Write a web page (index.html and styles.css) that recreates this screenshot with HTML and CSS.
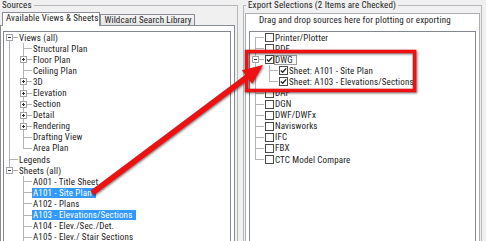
FILE: index.html
```html
<!DOCTYPE html>
<html lang="en">
<head>
    <meta charset="UTF-8">
    <title>Export</title>
    <link rel="stylesheet" href="styles.css">
</head>
<body>

    <div class="window">

        <fieldset class="group sources">
            <legend>Sources</legend>
            <div class="tabs">
                <div class="tab active">Available Views &amp; Sheets</div>
                <div class="tab">Wildcard Search Library</div>
            </div>
            <div class="tab-page">
                <ul class="tree">
                    <li class="row"><span class="cell first"><span class="exp"></span></span><span class="label">Views (all)</span></li>
                    <li class="row"><span class="cell pipe"></span><span class="cell tee"></span><span class="label">Structural Plan</span></li>
                    <li class="row"><span class="cell pipe"></span><span class="cell tee"><span class="exp plus"></span></span><span class="label">Floor Plan</span></li>
                    <li class="row"><span class="cell pipe"></span><span class="cell tee"></span><span class="label">Ceiling Plan</span></li>
                    <li class="row"><span class="cell pipe"></span><span class="cell tee"><span class="exp plus"></span></span><span class="label">3D</span></li>
                    <li class="row"><span class="cell pipe"></span><span class="cell tee"><span class="exp plus"></span></span><span class="label">Elevation</span></li>
                    <li class="row"><span class="cell pipe"></span><span class="cell tee"><span class="exp plus"></span></span><span class="label">Section</span></li>
                    <li class="row"><span class="cell pipe"></span><span class="cell tee"><span class="exp plus"></span></span><span class="label">Detail</span></li>
                    <li class="row"><span class="cell pipe"></span><span class="cell tee"><span class="exp plus"></span></span><span class="label">Rendering</span></li>
                    <li class="row"><span class="cell pipe"></span><span class="cell tee"></span><span class="label">Drafting View</span></li>
                    <li class="row"><span class="cell pipe"></span><span class="cell elbow"></span><span class="label">Area Plan</span></li>
                    <li class="row"><span class="cell tee"></span><span class="label">Legends</span></li>
                    <li class="row"><span class="cell elbow"><span class="exp"></span></span><span class="label">Sheets (all)</span></li>
                    <li class="row"><span class="cell"></span><span class="cell tee"></span><span class="label">A001 - Title Sheet</span></li>
                    <li class="row"><span class="cell"></span><span class="cell tee"></span><span class="label selected">A101 - Site Plan</span></li>
                    <li class="row"><span class="cell"></span><span class="cell tee"></span><span class="label">A102 - Plans</span></li>
                    <li class="row"><span class="cell"></span><span class="cell tee"></span><span class="label selected">A103 - Elevations/Sections</span></li>
                    <li class="row"><span class="cell"></span><span class="cell tee"></span><span class="label">A104 - Elev./Sec./Det.</span></li>
                    <li class="row"><span class="cell"></span><span class="cell tee"></span><span class="label">A105 - Elev./ Stair Sections</span></li>
                </ul>
            </div>
        </fieldset>

        <fieldset class="group export">
            <legend>Export Selections (2 Items are Checked)</legend>
            <div class="drop-box">
                <p class="hint">Drag and drop sources here for plotting or exporting</p>
                <ul class="tree checks">
                    <li class="row"><span class="cell first"></span><span class="cb"></span><span class="label">Printer/Plotter</span></li>
                    <li class="row"><span class="cell tee"></span><span class="cb"></span><span class="label">PDF</span></li>
                    <li class="row"><span class="cell tee"><span class="exp"></span></span><span class="cb"><svg viewBox="0 0 7 7" width="7" height="7"><path d="M0.8 3.4 L2.7 5.3 L6.2 1.4" fill="none" stroke="#222" stroke-width="1.4"/></svg></span><span class="label focus">DWG</span></li>
                    <li class="row"><span class="cell pipe"></span><span class="cell tee"></span><span class="cb"><svg viewBox="0 0 7 7" width="7" height="7"><path d="M0.8 3.4 L2.7 5.3 L6.2 1.4" fill="none" stroke="#222" stroke-width="1.4"/></svg></span><span class="label">Sheet: A101 - Site Plan</span></li>
                    <li class="row"><span class="cell pipe"></span><span class="cell elbow"></span><span class="cb"><svg viewBox="0 0 7 7" width="7" height="7"><path d="M0.8 3.4 L2.7 5.3 L6.2 1.4" fill="none" stroke="#222" stroke-width="1.4"/></svg></span><span class="label">Sheet: A103 - Elevations/Sections</span></li>
                    <li class="row"><span class="cell tee"></span><span class="cb"></span><span class="label">DAF</span></li>
                    <li class="row"><span class="cell tee"></span><span class="cb"></span><span class="label">DGN</span></li>
                    <li class="row"><span class="cell tee"></span><span class="cb"></span><span class="label">DWF/DWFx</span></li>
                    <li class="row"><span class="cell tee"></span><span class="cb"></span><span class="label">Navisworks</span></li>
                    <li class="row"><span class="cell tee"></span><span class="cb"></span><span class="label">IFC</span></li>
                    <li class="row"><span class="cell tee"></span><span class="cb"></span><span class="label">FBX</span></li>
                    <li class="row"><span class="cell elbow"></span><span class="cb"></span><span class="label">CTC Model Compare</span></li>
                </ul>
            </div>
        </fieldset>

    </div>

    <!-- callout drawn on top of the dialog -->
    <svg class="annot" viewBox="0 0 486 241" width="486" height="241">
        <g class="callout">
            <rect x="246.5" y="51.5" width="168" height="39" fill="none" stroke="#ee1111" stroke-width="3.5"/>
            <line x1="92" y1="193" x2="248" y2="76.3" stroke="#ee1111" stroke-width="5.5"/>
            <polygon points="263,65 252.1,83.8 241.9,70.2" fill="#ee1111"/>
        </g>
    </svg>

</body>
</html>
```

FILE: styles.css
```css
* {
    box-sizing: border-box;
}

body {
    margin: 0;
    width: 486px;
    height: 241px;
    overflow: hidden;
    position: relative;
    background: #f0f0f0;
    font-family: Roboto, "Liberation Sans", Arial, sans-serif;
    font-stretch: 80%;
    font-size: 9px;
    letter-spacing: 0.15px;
    color: #222;
}

.window {
    display: flex;
    gap: 5px;
    height: 100%;
}

/* group boxes */

.group {
    margin: 0;
    min-width: 0;
    display: flex;
    flex-direction: column;
    border: 1px solid #b3b7bb;
    border-bottom: none;
}

.group legend {
    padding: 0 2px;
    line-height: 11px;
}

.sources {
    flex: none;
    width: 243px;
    margin-left: -5px;
    padding: 1px 2px 0 4px;
}

.export {
    flex: none;
    width: 239px;
    padding: 2px 1px 0 1px;
}

.export legend {
    margin-left: 1px;
}

/* tabs */

.tabs {
    display: flex;
    align-items: flex-end;
    margin-left: 2px;
    position: relative;
    z-index: 1;
}

.tab {
    border: 1px solid #898c95;
    border-bottom: none;
    line-height: 11px;
    height: 11px;
    padding: 0 2px 0 3px;
    white-space: nowrap;
    background: linear-gradient(#f5f5f5, #e4e4e4);
}

.tab.active {
    height: 14px;
    margin-bottom: -1px;
    padding: 0 1px 0 3px;
    background: #fff;
}

.tab-page {
    flex: 1;
    min-height: 0;
    display: flex;
    flex-direction: column;
    background: #fff;
    border: 1px solid #898c95;
    border-bottom: none;
    padding: 5px 3px 0 2px;
}

/* tree views */

.tree {
    flex: 1;
    min-height: 0;
    overflow: hidden;
    list-style: none;
    margin: 0;
    padding: 0;
    border: 1px solid #828790;
    border-bottom: none;
    background: #fff;
}

.row {
    display: flex;
    align-items: center;
    height: 11.1px;
    white-space: nowrap;
}

.cell {
    flex: none;
    width: 14px;
    height: 100%;
    display: flex;
    align-items: center;
}

.pipe {
    background: linear-gradient(#b4b4b4, #b4b4b4) 5px 0 / 1px 100% no-repeat;
}

.tee {
    background:
        linear-gradient(#b4b4b4, #b4b4b4) 5px 0 / 1px 100% no-repeat,
        linear-gradient(#b4b4b4, #b4b4b4) 5px 50% / 9px 1px no-repeat;
}

.elbow {
    background:
        linear-gradient(#b4b4b4, #b4b4b4) 5px 0 / 1px 50% no-repeat,
        linear-gradient(#b4b4b4, #b4b4b4) 5px 50% / 9px 1px no-repeat;
}

.first {
    background:
        linear-gradient(#b4b4b4, #b4b4b4) 5px 100% / 1px 50% no-repeat,
        linear-gradient(#b4b4b4, #b4b4b4) 5px 50% / 9px 1px no-repeat;
}

.exp {
    width: 7px;
    height: 7px;
    margin-left: 2px;
    border: 1px solid #a3a3a3;
    background: linear-gradient(#333, #333) center / 3px 1px no-repeat, #fff;
}

.exp.plus {
    background:
        linear-gradient(#333, #333) center / 3px 1px no-repeat,
        linear-gradient(#333, #333) center / 1px 3px no-repeat,
        #fff;
}

.label {
    line-height: 10px;
    padding: 0 4px 0 1px;
}

.label.selected {
    background: #3399ff;
    color: #fff;
}

.label.focus {
    box-shadow: inset 0 0 0 1px #9c9c9c;
}

/* export side */

.drop-box {
    flex: 1;
    min-height: 0;
    display: flex;
    flex-direction: column;
    background: #fff;
    border: 1px solid #abadb3;
    border-bottom: none;
    padding: 0 3px;
}

.hint {
    margin: 1px 0 5px 10px;
    line-height: 11px;
}

.cb {
    flex: none;
    width: 9px;
    height: 9px;
    margin-left: 1px;
    border: 1px solid #4a4a4a;
    background: #fff;
    display: flex;
}

.cb svg {
    display: block;
}

/* annotation */

.annot {
    position: absolute;
    left: 0;
    top: 0;
    pointer-events: none;
}

.callout {
    filter: drop-shadow(1px 1px 1px rgba(0, 0, 0, 0.55));
}
```
